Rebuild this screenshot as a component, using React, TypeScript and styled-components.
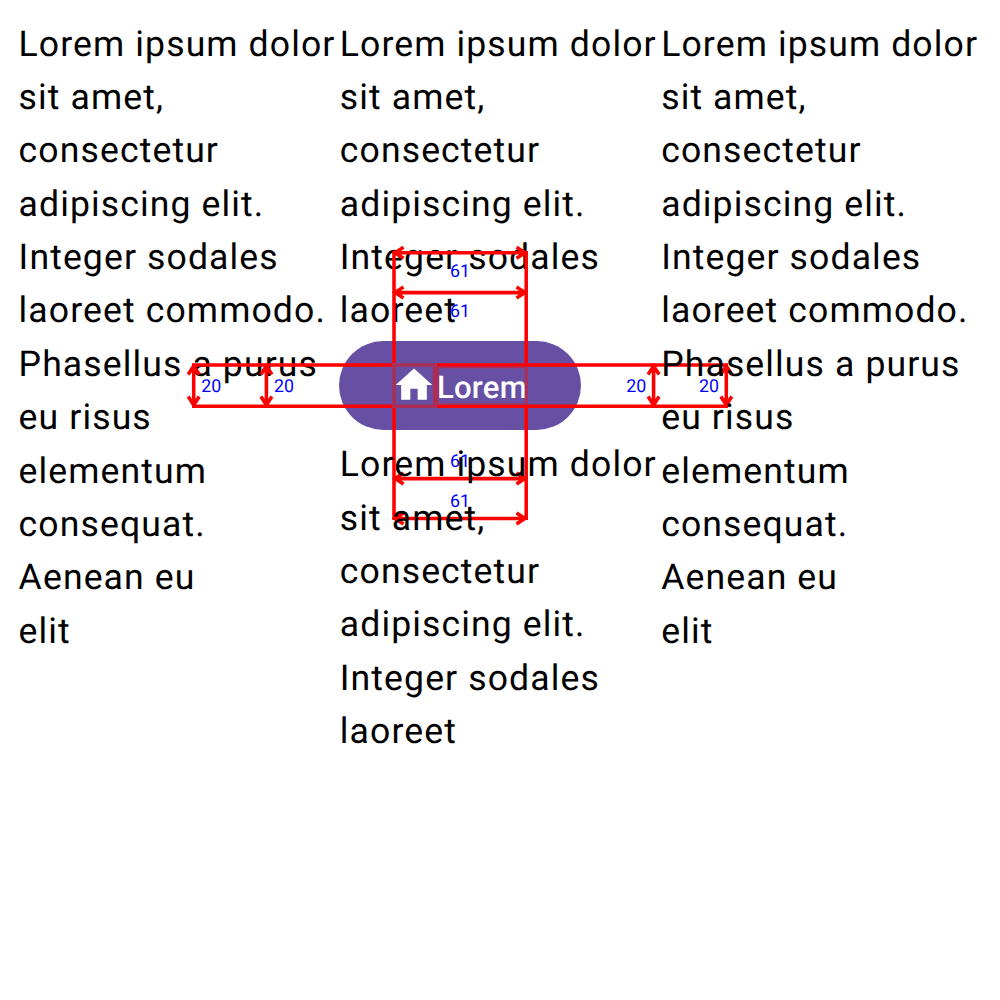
import React from 'react';
import styled, { createGlobalStyle } from 'styled-components';

const Global = createGlobalStyle`
  body { margin: 0; background: #fff; font-family: Roboto, sans-serif; text-rendering: geometricPrecision; }
`;
const Stage = styled.main`
  position: relative; box-sizing: border-box; width: 1000px; height: 1000px; overflow: hidden;
  padding: 17.6px 0 0 18.6px; display: grid; grid-template-columns: 321.2px 321.4px 321.2px; align-items: start;
`;
const Text = styled.p<{ $front?: boolean }>`
  position: relative; z-index: ${p => p.$front ? 2 : 0};
  margin: 0; font-size: 35.6px; line-height: 53.38px; letter-spacing: 1.11px; color: #000; white-space: pre;
`;
const Button = styled.div`
  box-sizing: border-box; width: 242px; height: 89px; margin: 3.1px 0 8.4px -0.8px; border-radius: 45px; background: #6750a4;
  display: flex; align-items: center; padding-left: 53.4px; color: #fff; font-size: 31.15px; font-weight: 500; letter-spacing: .22px;
`;
const ButtonLabel = styled.span`padding: 4px 0 0 .5px;`;
const Home = styled.svg`width: 44px; height: 44px; flex: none; margin-bottom: .6px;`;
const Overlay = styled.svg`position: absolute; z-index: 1; left: 0; top: 0; width: 1000px; height: 1000px;`;
const Label = styled.text`font: 17.8px Roboto, sans-serif; fill: #0000ff;`;

const H = ({ y }: { y: number }) => <path d={`M394 ${y}H526M403.5 ${y - 5.5}L395 ${y}L403.5 ${y + 5.5}M516.5 ${y - 5.5}L525 ${y}L516.5 ${y + 5.5}`} />;
const V = ({ x }: { x: number }) => <path d={`M${x} 365V406M${x - 5.5} 374.5L${x} 366L${x + 5.5} 374.5M${x - 5.5} 396.5L${x} 405L${x + 5.5} 396.5`} />;

const full = 'Lorem ipsum dolor\nsit amet,\nconsectetur\nadipiscing elit.\nInteger sodales\nlaoreet commodo.\nPhasellus a purus\neu risus\nelementum\nconsequat.\nAenean eu\nelit';
const short = 'Lorem ipsum dolor\nsit amet,\nconsectetur\nadipiscing elit.\nInteger sodales\nlaoreet';

export default function App() {
  return <><Global /><Stage>
    <Text>{full}</Text>
    <div><Text>{short}</Text><Button><Home viewBox="0 0 24 24"><path fill="#fff" d="M10 20v-6h4v6h5v-8h3L12 3 2 12h3v8z" /></Home><ButtonLabel>Lorem</ButtonLabel></Button><Text $front>{short}</Text></div>
    <Text $front>{full}</Text>
    <Overlay><g fill="none" stroke="#f00" strokeWidth="3.56">
      <path d="M394 251V363M394 408V520M526.2 251V363M526.2 408V520M192 365H392.3M437 365H728M192 406.2H392.3M437 406.2H728" />
      <g stroke="#ab2e59"><path d="M394.1 365H434.6V406.2H394.1Z" /><path d="M437.2 367V404.5" /><path d="M440 367.5H524.5M440 404H524.5" strokeWidth="1.5" /><path d="M526.3 367V404.5" strokeOpacity=".9" /></g>
      <H y={252.8} /><H y={292.6} /><H y={478.6} /><H y={518.5} /><V x={193.7} /><V x={266.4} /><V x={653.6} /><V x={726.3} />
    </g>
      <Label x="450" y="276.8">61</Label><Label x="450" y="316.8">61</Label><Label x="450" y="466.8">61</Label><Label x="450" y="506.8">61</Label>
      <Label x="201.2" y="391.8">20</Label><Label x="274" y="391.8">20</Label><Label x="626.2" y="391.8">20</Label><Label x="699" y="391.8">20</Label>
    </Overlay>
  </Stage></>;
}
